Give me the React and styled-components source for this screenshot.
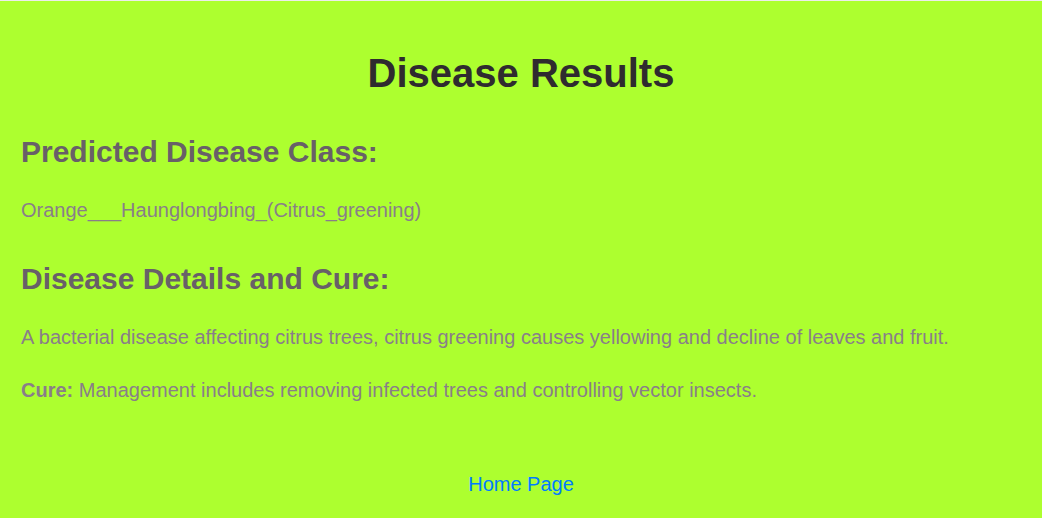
import React from "react";
import styled, { createGlobalStyle } from "styled-components";

const GlobalStyle = createGlobalStyle`
  html, body {
    margin: 0;
    padding: 0;
    background-color: #adff2f;
  }
  body {
    font-family: "Liberation Sans", Arial, sans-serif;
    border-top: 1px solid #ececec;
  }
`;

const disease = {
  name: "Orange___Haunglongbing_(Citrus_greening)",
  description:
    "A bacterial disease affecting citrus trees, citrus greening causes yellowing and decline of leaves and fruit.",
  cure: "Management includes removing infected trees and controlling vector insects.",
};

export default function App() {
  return (
    <>
      <GlobalStyle />
      <Page>
        <Title>Disease Results</Title>
        <Section $top={39}>
          <Heading>Predicted Disease Class:</Heading>
          <Text>{disease.name}</Text>
        </Section>
        <Section $top={40}>
          <Heading>Disease Details and Cure:</Heading>
          <Text>{disease.description}</Text>
          <Text>
            <strong>Cure:</strong> {disease.cure}
          </Text>
        </Section>
        <Footer>
          <HomeLink href="#">Home Page</HomeLink>
        </Footer>
      </Page>
    </>
  );
}

const Page = styled.div`
  padding: 20px 21px;
`;

const Title = styled.h1`
  margin: 30px 0 0;
  text-align: center;
  font-size: 40px;
  font-weight: bold;
  color: #2f2b2f;
`;

const Section = styled.div`
  margin-top: ${(p) => p.$top}px;
`;

const Heading = styled.h2`
  margin: 0;
  font-size: 30px;
  font-weight: bold;
  color: #686068;
`;

const Text = styled.p`
  margin: 30px 0 0;
  font-size: 20px;
  color: #897e89;

  strong {
    font-weight: bold;
  }
`;

const Footer = styled.div`
  margin-top: 71px;
  text-align: center;
`;

const HomeLink = styled.a`
  font-size: 20px;
  color: #007bff;
  text-decoration: none;
`;
